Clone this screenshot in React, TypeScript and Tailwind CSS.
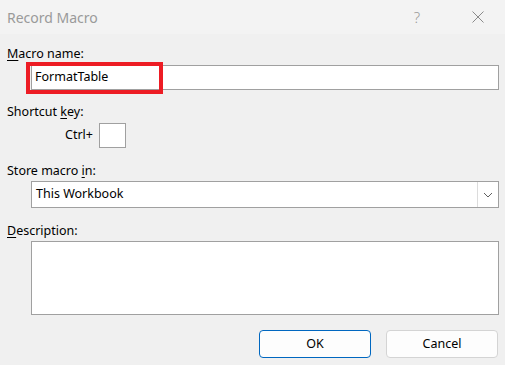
const FONT = "font-['Noto_Sans','Open_Sans',sans-serif]";

function Label({ accessKey, before = "", after }: { accessKey: string; before?: string; after: string }) {
  return (
    <div className="h-[16px] text-[12.5px] leading-[18px] text-black">
      {before}
      <span className="underline underline-offset-2">{accessKey}</span>
      {after}
    </div>
  );
}

export default function App() {
  return (
    <div className={`w-[505px] h-[365px] bg-[#f0f0f0] overflow-hidden ${FONT}`}>
      {/* Title bar */}
      <div className="h-[34px] bg-[#f3f3f3] flex items-center">
        <span className="pl-[7px] text-[14px] text-[#9a9a9a] flex-1">Record Macro</span>
        <span className="text-[15px] font-light text-[#9a9a9a] mr-[52px]">?</span>
        <svg width="12" height="12" viewBox="0 0 12 12" className="mr-[21px]">
          <path d="M0.5 0.5 L11.5 11.5 M11.5 0.5 L0.5 11.5" stroke="#8a8a8a" strokeWidth="1" fill="none" />
        </svg>
      </div>

      <div className="px-[7px] pt-[11px]">
        <Label accessKey="M" after="acro name:" />
        <div className="relative mt-[4px] ml-[24px] mr-[-1px]">
          <div className="h-[25px] bg-white border border-[#a0a0a0] flex items-center pl-[3px] text-[12.5px] text-black">
            FormatTable
          </div>
          <div className="absolute left-[-5px] top-[-3px] w-[137px] h-[32px] border-[4px] border-[#ed1c24]" />
        </div>

        <div className="mt-[13px]">
          <Label before="Shortcut " accessKey="k" after="ey:" />
        </div>
        <div className="flex items-center mt-[4px] ml-[58px] gap-[6px]">
          <span className="text-[12.5px] text-black">Ctrl+</span>
          <div className="w-[27px] h-[25px] bg-white border border-[#a0a0a0]" />
        </div>

        <div className="mt-[14px]">
          <Label before="Store macro " accessKey="i" after="n:" />
        </div>
        <div className="mt-[3px] ml-[24px] mr-[-1px] h-[27px] bg-white border border-[#a0a0a0] flex">
          <div className="flex-1 flex items-center pl-[4px] text-[12.5px] text-black">This Workbook</div>
          <div className="w-[21px] border-l border-[#dcdcdc] flex items-center justify-center">
            <svg width="10" height="6" viewBox="0 0 10 6">
              <path d="M1 1 L5 5 L9 1" stroke="#606060" strokeWidth="1" fill="none" />
            </svg>
          </div>
        </div>

        <div className="mt-[14px]">
          <Label accessKey="D" after="escription:" />
        </div>
        <div className="mt-[3px] ml-[24px] mr-[-1px] h-[74px] bg-white border border-[#a0a0a0]" />

        <div className="flex justify-end gap-[15px] mt-[15px]">
          <button className="w-[112px] h-[28px] rounded-[4px] bg-[#fdfdfd] border border-[#0067c0] text-[12.5px] text-black">
            OK
          </button>
          <button className="w-[112px] h-[28px] rounded-[4px] bg-[#fdfdfd] border border-[#d4d4d4] text-[12.5px] text-black">
            Cancel
          </button>
        </div>
      </div>
    </div>
  );
}
